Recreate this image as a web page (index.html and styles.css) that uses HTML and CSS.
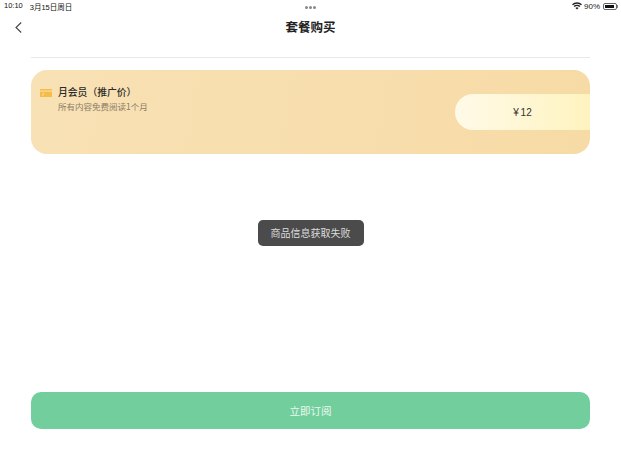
FILE: index.html
```html
<!DOCTYPE html>
<html lang="zh">
<head>
<meta charset="utf-8">
<title>套餐购买</title>
<link rel="stylesheet" href="styles.css">
</head>
<body>
<div class="page">
  <div class="status">
    <div class="status-left"><span>10:10</span><span>3月15日周日</span></div>
    <div class="status-right">
      <svg class="wifi" width="10" height="8" viewBox="0 0 10 8"><path d="M5 7.6 3.4 5.9a2.3 2.3 0 0 1 3.2 0zM2.6 5.1 1.6 4a4.9 4.9 0 0 1 6.8 0l-1 1.1a3.4 3.4 0 0 0-4.800 0zM.9 3.300 0 2.300a7.200 7.200 0 0 1 10 0l-.9 1a5.900 5.900 0 0 0-8.200 0z" fill="#222"/></svg>
      <span>90%</span>
      <span class="battery"><span class="battery-fill"></span></span><span class="battery-tip"></span>
    </div>
  </div>
  <div class="dots"><i></i><i></i><i></i></div>
  <header class="nav">
    <svg class="back" width="7" height="11" viewBox="0 0 7 11"><path d="M6.200.5 1 5.500 6.200 10.500" fill="none" stroke="#444" stroke-width="1.100"/></svg>
    <h1>套餐购买</h1>
  </header>
  <main class="content">
    <section class="card">
      <div class="info">
        <div class="title-row">
          <svg class="ticket" width="12" height="8" viewBox="0 0 12 8"><rect width="12" height="8" rx=".5" fill="#f5bc4c"/><rect y="1.600" width="12" height="1" fill="#fde3a6"/><path d="M1.800 6.500 3.200 4.200H4.400L3 6.500z" fill="#fde3a6"/></svg>
          <span class="title">月会员（推广价）</span>
        </div>
        <div class="desc">所有内容免费阅读1个月</div>
      </div>
      <div class="price">¥ 12</div>
    </section>
    <div class="toast-wrap"><div class="toast">商品信息获取失败</div></div>
    <button class="subscribe" type="button">立即订阅</button>
  </main>
</div>
</body>
</html>
```
FILE: styles.css
```css
* { box-sizing: border-box; }
html, body { margin: 0; padding: 0; background: #fff; }
body { font-family: "Noto Sans CJK SC", "Liberation Sans", sans-serif; }
.page { width: 621px; height: 466px; display: flex; flex-direction: column; overflow: hidden; position: relative; }
.status { height: 12px; padding: 0 3px 0 4px; display: flex; justify-content: space-between; align-items: center; font-family: "Liberation Sans", "Noto Sans CJK SC", sans-serif; font-size: 8px; color: #222; }
.status-left { display: flex; gap: 7px; font-size: 7.500px; color: #111; }
.status-right { display: flex; align-items: center; gap: 2px; }
.battery { width: 14px; height: 7px; border: 1px solid #666; border-radius: 2px; padding: 1px; display: block; margin-left: 1px; }
.battery-fill { display: block; height: 100%; width: 90%; background: #111; }
.battery-tip { width: 1px; height: 3px; background: #888; margin-left: -2px; }
.dots { position: absolute; top: 6px; left: 305px; display: flex; gap: 1px; }
.dots i { width: 3px; height: 3px; border-radius: 50%; background: #888; }
.nav { height: 46px; margin: 0 31px; border-bottom: 1px solid #e8e8e8; display: flex; justify-content: center; padding-top: 5px; position: relative; }
.nav h1 { margin: 0; font-size: 12.500px; line-height: 19px; font-weight: 700; color: #222; height: 19px; }
.back { position: absolute; left: -16px; top: 10px; }
.content { flex: 1; padding: 12px 31px 37px; display: flex; flex-direction: column; }
.card { height: 84px; border-radius: 16px; background: linear-gradient(100deg, #f8e1b5, #f7dba6); position: relative; display: flex; padding-top: 15px; padding-left: 9px; }
.title-row { display: flex; align-items: center; gap: 6px; height: 15px; }
.title { font-size: 9.800px; line-height: 15px; font-weight: 500; color: #2b2b2b; }
.desc { font-size: 8.500px; line-height: 13px; color: #8a7c66; margin-left: 18px; }
.price { position: absolute; right: 0; top: 24px; width: 135px; height: 36px; border-radius: 18px 0 0 18px; background: linear-gradient(90deg, #fffae8, #fef3bf); display: flex; align-items: center; justify-content: center; font-family: "Liberation Sans", sans-serif; font-size: 10px; word-spacing: -1px; color: #333; }
.toast-wrap { flex: 1; display: flex; justify-content: center; padding-top: 66px; }
.toast { width: 106px; height: 26px; background: #4b4b4b; border-radius: 5px; color: #ddd; font-size: 10px; line-height: 25px; text-align: center; }
.subscribe { height: 37px; border: 0; border-radius: 10px; background: #72cf9d; color: #eaf8f0; font-family: inherit; font-size: 10.500px; padding: 0; }
```
